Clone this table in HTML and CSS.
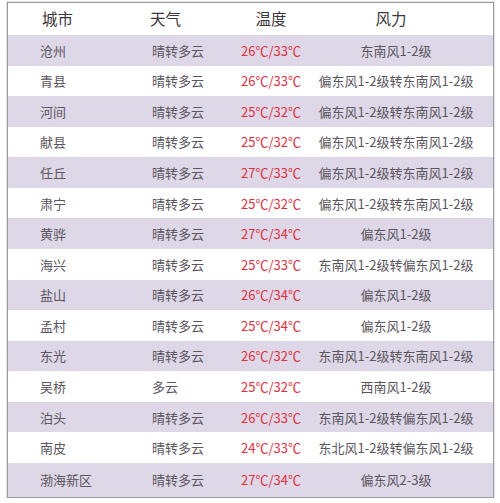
FILE: index.html
```html
<!DOCTYPE html>
<html lang="zh">
<head>
<meta charset="utf-8">
<title>天气预报</title>
<link rel="stylesheet" href="styles.css">
</head>
<body>
<div class="frame">
  <div class="row head">
    <div class="c1">城市</div><div class="c2">天气</div><div class="c3">温度</div><div class="c4">风力</div>
  </div>
  <div class="row alt"><div class="c1">沧州</div><div class="c2">晴转多云</div><div class="c3 t">26℃/33℃</div><div class="c4">东南风1-2级</div></div>
  <div class="row"><div class="c1">青县</div><div class="c2">晴转多云</div><div class="c3 t">26℃/33℃</div><div class="c4">偏东风1-2级转东南风1-2级</div></div>
  <div class="row alt"><div class="c1">河间</div><div class="c2">晴转多云</div><div class="c3 t">25℃/32℃</div><div class="c4">偏东风1-2级转东南风1-2级</div></div>
  <div class="row"><div class="c1">献县</div><div class="c2">晴转多云</div><div class="c3 t">25℃/32℃</div><div class="c4">偏东风1-2级转东南风1-2级</div></div>
  <div class="row alt"><div class="c1">任丘</div><div class="c2">晴转多云</div><div class="c3 t">27℃/33℃</div><div class="c4">偏东风1-2级转东南风1-2级</div></div>
  <div class="row"><div class="c1">肃宁</div><div class="c2">晴转多云</div><div class="c3 t">25℃/32℃</div><div class="c4">偏东风1-2级转东南风1-2级</div></div>
  <div class="row alt"><div class="c1">黄骅</div><div class="c2">晴转多云</div><div class="c3 t">27℃/34℃</div><div class="c4">偏东风1-2级</div></div>
  <div class="row"><div class="c1">海兴</div><div class="c2">晴转多云</div><div class="c3 t">25℃/33℃</div><div class="c4">东南风1-2级转偏东风1-2级</div></div>
  <div class="row alt"><div class="c1">盐山</div><div class="c2">晴转多云</div><div class="c3 t">26℃/34℃</div><div class="c4">偏东风1-2级</div></div>
  <div class="row"><div class="c1">孟村</div><div class="c2">晴转多云</div><div class="c3 t">25℃/34℃</div><div class="c4">偏东风1-2级</div></div>
  <div class="row alt"><div class="c1">东光</div><div class="c2">晴转多云</div><div class="c3 t">26℃/32℃</div><div class="c4">东南风1-2级转东南风1-2级</div></div>
  <div class="row"><div class="c1">吴桥</div><div class="c2">多云</div><div class="c3 t">25℃/32℃</div><div class="c4">西南风1-2级</div></div>
  <div class="row alt"><div class="c1">泊头</div><div class="c2">晴转多云</div><div class="c3 t">26℃/33℃</div><div class="c4">东南风1-2级转偏东风1-2级</div></div>
  <div class="row"><div class="c1">南皮</div><div class="c2">晴转多云</div><div class="c3 t">24℃/33℃</div><div class="c4">东北风1-2级转偏东风1-2级</div></div>
  <div class="row alt last"><div class="c1">渤海新区</div><div class="c2">晴转多云</div><div class="c3 t">27℃/34℃</div><div class="c4">偏东风2-3级</div></div>
</div>
</body>
</html>
```

FILE: styles.css
```css
html, body {
  margin: 0;
  padding: 0;
  background: #ffffff;
}
body {
  font-family: "Noto Sans CJK SC", "Noto Sans", sans-serif;
}
.frame {
  margin: 2px 0 0 7px;
  width: 485px;
  border: 1px solid #9c9a9e;
  box-shadow: 0 0 0 1px #e4e4e4;
  background: #ffffff;
}
.row {
  display: grid;
  grid-template-columns: 137px 85px 82px 168px 1fr;
  align-items: center;
  height: 30.57px;
  font-size: 13px;
  color: #5b5660;
  line-height: 1;
}
.row.alt {
  background: #ddd7e7;
}
.row.head {
  height: 32px;
  font-size: 15.5px;
  color: #3c3640;
}
.row.last {
  height: 34px;
}
.c1 {
  padding-left: 32px;
}
.head .c1 {
  padding-left: 34px;
}
.c2 {
  padding-left: 7px;
}
.head .c2 {
  padding-left: 5px;
}
.c3 {
  text-align: center;
}
.c4 {
  text-align: center;
  white-space: nowrap;
}
.head .c4 {
  padding-right: 10px;
}
.t {
  color: #e0303f;
}
```
